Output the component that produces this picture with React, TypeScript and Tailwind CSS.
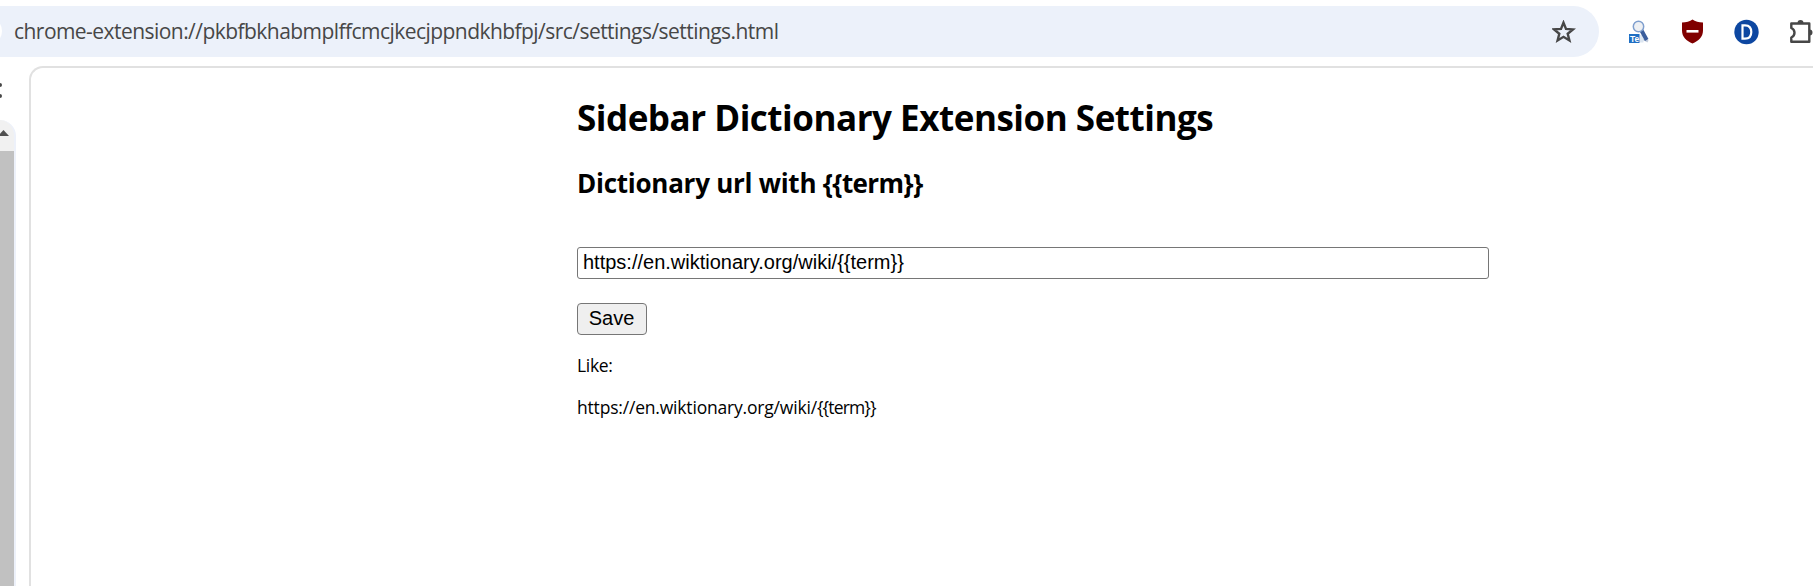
const sans = "font-['Open_Sans','Noto_Sans',sans-serif]";

function StarIcon() {
  return (
    <svg className="block" width="24" height="24" viewBox="0 0 24 24" fill="none">
      <path d="M11.5 2.6 14 8.9 21 9.4 15.7 13.8 17.4 20.5 11.5 16.8 5.6 20.5 7.3 13.8 2 9.4 9 8.9Z" stroke="#474747" strokeWidth="2.4" strokeLinejoin="miter" />
    </svg>
  );
}

function SearchTextIcon() {
  return (
    <svg className="block" width="24" height="24" viewBox="0 0 24 24">
      <rect x="11.5" y="15" width="4" height="7.5" fill="#dce6f1" />
      <path d="M15.500 19 20 21.500" stroke="#c3cddd" strokeWidth="2.500" />
      <path d="M13.200 10 18.700 20" stroke="#3a5d9c" strokeWidth="4" />
      <circle cx="10.5" cy="6.5" r="5.200" fill="#eef0f3" stroke="#7f9fce" strokeWidth="1.500" />
      <rect x="1" y="14" width="10.5" height="9" fill="#1f6fc4" />
      <text x="2" y="21.5" fontFamily="Liberation Sans" fontWeight="700" fontSize="8.5" fill="#fff">Te</text>
    </svg>
  );
}

function ShieldIcon() {
  return (
    <svg className="block" width="24" height="26" viewBox="0 0 24 26">
      <path d="M11.5 .5C9 2.5 5 3.5 1 3.5V11.5C1 18 5.5 22 11.5 24.5 17.5 22 22 18 22 11.5V3.5C18 3.5 14 2.5 11.5 .5Z" fill="#800000" />
      <path d="M5.5 12.3H17.5" stroke="#fff" strokeWidth="2.6" />
    </svg>
  );
}

function DictionaryIcon() {
  return (
    <svg className="block" width="26" height="26" viewBox="0 0 26 26">
      <circle cx="13.5" cy="13" r="12.2" fill="#0d47a1" />
      <path d="M9.5 6.3V19.7H12C16.7 19.7 18.3 17 18.3 13S16.7 6.3 12 6.3Z" fill="none" stroke="#fff" strokeWidth="2.2" />
    </svg>
  );
}

function PuzzleIcon() {
  return (
    <svg className="block shrink-0" width="26" height="26" viewBox="0 0 26 26" fill="none">
      <path d="M2.3 4.5H20.3V22.8H2.3V18.5C4 17.7 5.5 15.8 5.5 13.800S4 9.700 2.300 9Z" stroke="#474747" strokeWidth="2.4" strokeLinejoin="round" />
      <path d="M8.5 4A3 3 0 0 1 14.5 4ZM20.5 10.5A3 3 0 0 1 20.5 16.5Z" fill="#474747" />
    </svg>
  );
}

export default function App() {
  return (
    <div className={`h-[586px] w-full overflow-hidden bg-white ${sans} text-black`}>
      <header className="flex h-[66px] items-start pt-[6px]">
        <div className="relative flex h-[51px] w-[1599px] shrink-0 items-center justify-between overflow-hidden rounded-r-full bg-[#ecf1fa] pl-[14px] pr-[23px]">
          <span className="absolute -left-[26px] top-[11px] size-[28px] rounded-full bg-white" />
          <span className="whitespace-nowrap text-[21px] tracking-[-0.548px] text-[#474747]">
            chrome-extension://pkbfbkhabmplffcmcjkecjppndkhbfpj/src/settings/settings.html
          </span>
          <StarIcon />
        </div>
        <div className="flex h-[51px] shrink-0 items-center">
          <div className="ml-[29px]"><SearchTextIcon /></div>
          <div className="ml-[29px]"><ShieldIcon /></div>
          <div className="ml-[28px]"><DictionaryIcon /></div>
          <div className="ml-[30px]"><PuzzleIcon /></div>
        </div>
      </header>
      <div className="flex h-[520px]">
        <aside className="w-[29px] shrink-0 overflow-hidden">
          <div className="flex h-[54px] flex-col gap-[7px] pt-[17px]">
            <span className="h-[4px] w-[2px] rounded-r-full bg-[#474747]" />
            <span className="h-[4px] w-[2px] rounded-r-full bg-[#474747]" />
          </div>
          <div className="h-[466px] w-[16px] overflow-hidden rounded-tr-[18px] border-r-2 border-[#edf1fa] bg-[#f1f1f1]">
            <svg className="block" width="14" height="31" viewBox="0 0 14 31">
              <path d="M-2 16 3.500 10 9 16Z" fill="#505050" />
            </svg>
            <div className="h-[435px] w-[14px] bg-[#c1c1c1]" />
          </div>
        </aside>
        <main className="grow rounded-tl-[14px] border-l-2 border-t-2 border-[#e1e1e1] pl-[546px]">
          <h1 className="mt-[26px] h-[48px] whitespace-nowrap text-[35px] font-bold leading-[48px] tracking-[-0.48px]">
            Sidebar Dictionary Extension Settings
          </h1>
          <h2 className="mt-[23px] h-[36px] whitespace-nowrap text-[26px] font-bold leading-[36px] tracking-[-0.26px]">
            Dictionary url with <span className="tracking-[-0.65px]">{"{{term}}"}</span>
          </h2>
          <input
            className="mt-[46px] block h-[32px] w-[912px] rounded-[3px] border border-[#767676] bg-white px-[5px] pb-[2px] font-['Liberation_Sans',Arial,sans-serif] text-[20px] leading-[23px] outline-none"
            defaultValue="https://en.wiktionary.org/wiki/{{term}}"
          />
          <button className="mt-[24px] block h-[32px] w-[70px] rounded-[4px] border border-[#767676] bg-[#efefef] pb-[2px] pr-[1px] font-['Liberation_Sans',Arial,sans-serif] text-[20px] leading-[23px]">
            Save
          </button>
          <p className="mt-[18px] h-[24px] text-[17.5px] leading-[24px] tracking-[-0.33px]">Like:</p>
          <p className="mt-[18px] h-[24px] text-[17.5px] leading-[24px] tracking-[-0.19px]">
            https://en.wiktionary.org/wiki/<span className="tracking-[-0.85px]">{"{{term}}"}</span>
          </p>
        </main>
      </div>
    </div>
  );
}
